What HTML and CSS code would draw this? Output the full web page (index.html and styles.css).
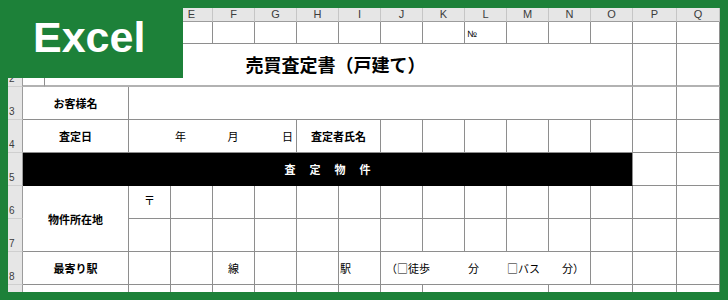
FILE: index.html
```html
<!DOCTYPE html>
<html lang="ja">
<head>
<meta charset="utf-8">
<title>売買査定書（戸建て）</title>
<link rel="stylesheet" href="styles.css">
</head>
<body>
<div class="frame">
  <div class="sheet">
    <div class="grid">
      <!-- column headers (A–D lie under the logo) -->
      <div class="ch"></div>
      <div class="ch"></div><div class="ch"></div><div class="ch"></div><div class="ch"></div>
      <div class="ch">E</div><div class="ch">F</div><div class="ch">G</div><div class="ch">H</div>
      <div class="ch">I</div><div class="ch">J</div><div class="ch">K</div><div class="ch">L</div>
      <div class="ch">M</div><div class="ch">N</div><div class="ch">O</div><div class="ch">P</div>
      <div class="ch">Q</div>

      <!-- row 1 -->
      <div class="rh"></div>
      <div class="c"></div><div class="c"></div><div class="c"></div><div class="c"></div>
      <div class="c"></div><div class="c"></div><div class="c"></div><div class="c"></div>
      <div class="c"></div><div class="c"></div><div class="c"></div>
      <div class="c no">№</div>
      <div class="c"></div><div class="c"></div><div class="c"></div><div class="c"></div>
      <div class="c"></div>

      <!-- row 2 -->
      <div class="rh">2</div>
      <div class="c r2"></div>
      <div class="c r2 span14 title">売買査定書（戸建て）</div>
      <div class="c r2"></div><div class="c r2"></div>

      <!-- row 3 -->
      <div class="rh">3</div>
      <div class="c span3 label">お客様名</div>
      <div class="c span12"></div>
      <div class="c"></div><div class="c"></div>

      <!-- row 4 -->
      <div class="rh">4</div>
      <div class="c span3 label">査定日</div>
      <div class="c span4 date">
        <span class="d-blank"></span>
        <span class="d-y">年</span>
        <span class="d-m">月</span>
        <span class="d-d">日</span>
      </div>
      <div class="c span2 label">査定者氏名</div>
      <div class="c"></div><div class="c"></div><div class="c"></div><div class="c"></div>
      <div class="c"></div><div class="c"></div><div class="c"></div><div class="c"></div>

      <!-- row 5 -->
      <div class="rh">5</div>
      <div class="c span15 bar"><span class="bar-text">査定物件</span></div>
      <div class="c"></div><div class="c"></div>

      <!-- row 6 -->
      <div class="rh">6</div>
      <div class="c span3 rows2 label">物件所在地</div>
      <div class="c zip">〒</div>
      <div class="c"></div><div class="c"></div><div class="c"></div><div class="c"></div>
      <div class="c"></div><div class="c"></div><div class="c"></div><div class="c"></div>
      <div class="c"></div><div class="c"></div><div class="c"></div><div class="c"></div>
      <div class="c"></div>

      <!-- row 7 -->
      <div class="rh">7</div>
      <div class="c"></div><div class="c"></div><div class="c"></div><div class="c"></div>
      <div class="c"></div><div class="c"></div><div class="c"></div><div class="c"></div>
      <div class="c"></div><div class="c"></div><div class="c"></div><div class="c"></div>
      <div class="c"></div><div class="c"></div>

      <!-- row 8 -->
      <div class="rh">8</div>
      <div class="c span3 label">最寄り駅</div>
      <div class="c"></div><div class="c"></div>
      <div class="c txt center">線</div>
      <div class="c"></div><div class="c"></div>
      <div class="c txt left">駅</div>
      <div class="c span5 access">
        <span>（□徒歩</span><span class="m1">分</span><span class="m2">□バス</span><span class="m3">分）</span>
      </div>
      <div class="c"></div><div class="c"></div><div class="c"></div>

      <!-- row 9 (cut off by the frame) -->
      <div class="rh"></div>
      <div class="c span3"></div>
      <div class="c"></div><div class="c"></div><div class="c"></div><div class="c"></div>
      <div class="c"></div><div class="c"></div><div class="c"></div>
      <div class="c span3"></div>
      <div class="c span2"></div>
      <div class="c"></div><div class="c"></div>
    </div>
  </div>
  <div class="logo">Excel</div>
</div>
</body>
</html>
```

FILE: styles.css
```css
html, body {
  margin: 0;
  padding: 0;
}

body {
  background: #1d8139;
  width: 728px;
  height: 300px;
  overflow: hidden;
  font-family: "Noto Sans CJK JP", "Noto Sans", sans-serif;
  color: #000;
}

.frame {
  position: relative;
  width: 728px;
  height: 300px;
  padding: 8px;
  box-sizing: border-box;
}

.sheet {
  width: 712px;
  height: 284px;
  overflow: hidden;
  background: #fff;
}

.grid {
  display: grid;
  grid-template-columns: 15px 22px repeat(14, 42px) 44px 43px;
  grid-template-rows: 14px 22px 43px repeat(6, 33px) 20px;
}

.grid > div {
  box-sizing: border-box;
  min-width: 0;
  overflow: hidden;
}

/* column headers */
.ch {
  background: #e6e6e6;
  border-right: 1px solid #c6c6c6;
  border-bottom: 1px solid #9c9c9c;
  font-family: "Liberation Sans", Arial, sans-serif;
  font-size: 11px;
  line-height: 13px;
  color: #3c3c3c;
  text-align: center;
}

/* row headers */
.rh {
  background: #e6e6e6;
  border-right: 1px solid #9c9c9c;
  border-bottom: 1px solid #cfcfcf;
  font-family: "Liberation Sans", Arial, sans-serif;
  font-size: 10px;
  line-height: 10px;
  color: #3c3c3c;
  display: flex;
  align-items: flex-end;
  padding: 0 0 2px 1px;
}

/* cells */
.c {
  border-right: 1px solid #8e8e8e;
  border-bottom: 1px solid #8e8e8e;
  font-size: 11px;
  line-height: 14px;
}

.r2 {
  border-bottom: 2px solid #b2b2b2;
}

.span2 { grid-column: span 2; }
.span3 { grid-column: span 3; }
.span4 { grid-column: span 4; }
.span5 { grid-column: span 5; }
.span12 { grid-column: span 12; }
.span14 { grid-column: span 14; }
.span15 { grid-column: span 15; }
.rows2 { grid-row: span 2; }

.no {
  font-family: "Liberation Sans", Arial, sans-serif;
  font-size: 9px;
  line-height: 9px;
  padding: 8px 0 0 2px;
}

.title {
  display: flex;
  align-items: center;
  justify-content: center;
  font-size: 18px;
  font-weight: 700;
  line-height: 22px;
  padding: 0 6px 1px 0;
}

.label {
  display: flex;
  align-items: center;
  justify-content: center;
  font-weight: 700;
}

.date {
  display: grid;
  grid-template-columns: repeat(4, 42px);
  align-items: center;
}

.d-y {
  padding-left: 4px;
}

.d-m {
  text-align: center;
  padding-right: 2px;
}

.d-d {
  text-align: right;
  padding-right: 4px;
}

.bar {
  background: #000;
  border-color: #000 #8e8e8e #000 #000;
  display: flex;
  align-items: center;
  justify-content: center;
}

.bar-text {
  color: #fff;
  font-weight: 700;
  letter-spacing: 14px;
  margin-right: -14px;
}

.zip {
  text-align: center;
  padding-top: 7px;
}

.txt {
  display: flex;
  align-items: center;
}

.center {
  justify-content: center;
}

.left {
  padding-left: 1px;
}

.access {
  display: flex;
  align-items: center;
  padding-left: 5px;
  white-space: nowrap;
}

.m1 { margin-left: 38px; }
.m2 { margin-left: 28px; }
.m3 { margin-left: 22px; }

/* logo badge */
.logo {
  position: absolute;
  top: 0;
  left: 0;
  width: 183px;
  height: 78px;
  box-sizing: border-box;
  background: #1d8139;
  color: #fff;
  font-family: "Liberation Sans", Arial, sans-serif;
  font-weight: 700;
  font-size: 43px;
  line-height: 43px;
  padding: 16px 0 0 33px;
}
```
